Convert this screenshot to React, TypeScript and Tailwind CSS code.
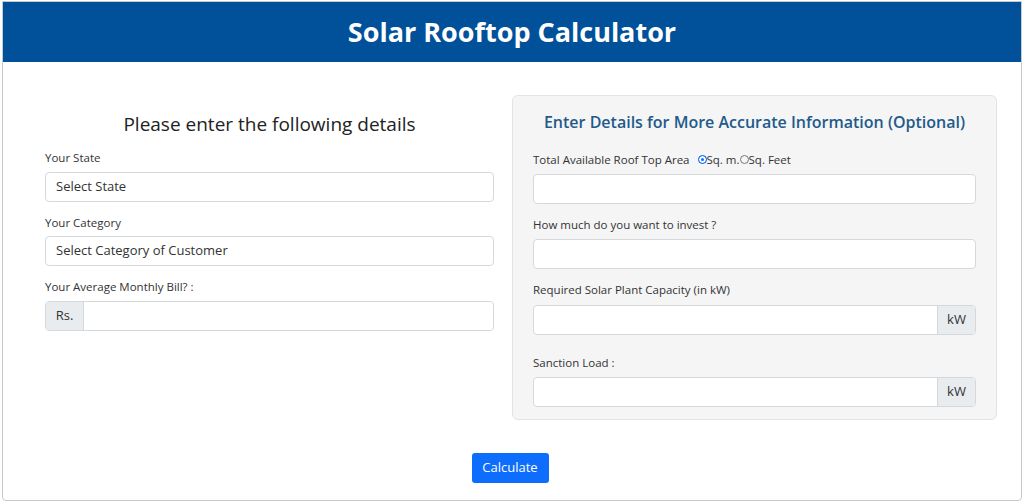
export default function App() {
  const f = { fontFamily: '"Open Sans", sans-serif' };
  const input = "h-[30px] bg-white border border-[#d6d9dc] rounded-[4px]";
  const label = "text-[11.5px] text-[#333] leading-none";
  return (
    <div style={f} className="w-[1024px] h-[503px] bg-white pt-[1px] pl-[2px]">
      <div className="w-[1020px] h-[500px] border border-[#c9c9c9] rounded-b-[4px] flex flex-col">
        <div className="h-[60px] bg-[#00519a] flex items-center justify-center text-white text-[27px] font-bold">Solar Rooftop Calculator</div>
        <div className="flex pl-[42px] pt-[33px]">
          <div className="w-[449px] pt-[20px]">
            <div className="text-center text-[19px] text-[#222] leading-none">Please enter the following details</div>
            <div className={label + " mt-[18px]"}>Your State</div>
            <div className={input + " mt-[8px] flex items-center px-[10px] text-[13px] text-[#333]"}>Select State</div>
            <div className={label + " mt-[15px]"}>Your Category</div>
            <div className={input + " mt-[8px] flex items-center px-[10px] text-[13px] text-[#333]"}>Select Category of Customer</div>
            <div className={label + " mt-[15px]"}>Your Average Monthly Bill? :</div>
            <div className={input + " mt-[8px] flex overflow-hidden"}>
              <div className="w-[38px] bg-[#e9ecef] border-r border-[#d6d9dc] flex items-center justify-center text-[13px] text-[#333]">Rs.</div>
            </div>
          </div>
          <div className="ml-[18px] w-[485px] h-[325px] bg-[#f5f5f6] border border-[#e3e3e3] rounded-[6px] px-[20px] pt-[14px]">
            <div className="text-center text-[16px] font-semibold text-[#1f5a8a]">Enter Details for More Accurate Information (Optional)</div>
            <div className={label + " mt-[20px] flex items-center"}>Total Available Roof Top Area
              <span className="ml-[8px] inline-block w-[9px] h-[9px] rounded-full border border-[#0d6efd] bg-[#0d6efd] shadow-[inset_0_0_0_2px_white]"></span>Sq. m.
              <span className="inline-block w-[9px] h-[9px] rounded-full border border-[#777]"></span>Sq. Feet</div>
            <div className={input + " mt-[8px] h-[27px]"}></div>
            <div className={label + " mt-[15px]"}>How much do you want to invest ?</div>
            <div className={input + " mt-[9px]"}></div>
            <div className={label + " mt-[15px]"}>Required Solar Plant Capacity (in kW)</div>
            <div className={input + " mt-[9px] flex overflow-hidden"}>
              <div className="flex-1"></div>
              <div className="w-[38px] bg-[#e9ecef] border-l border-[#d6d9dc] flex items-center justify-center text-[13px] text-[#333]">kW</div>
            </div>
            <div className={label + " mt-[22px]"}>Sanction Load :</div>
            <div className={input + " mt-[9px] flex overflow-hidden"}>
              <div className="flex-1"></div>
              <div className="w-[38px] bg-[#e9ecef] border-l border-[#d6d9dc] flex items-center justify-center text-[13px] text-[#333]">kW</div>
            </div>
          </div>
        </div>
        <div className="flex justify-center mt-[33px] pr-[4px]">
          <button className="w-[77px] h-[30px] bg-[#0d6efd] text-white text-[13px] rounded-[3px]">Calculate</button>
        </div>
      </div>
    </div>
  );
}
